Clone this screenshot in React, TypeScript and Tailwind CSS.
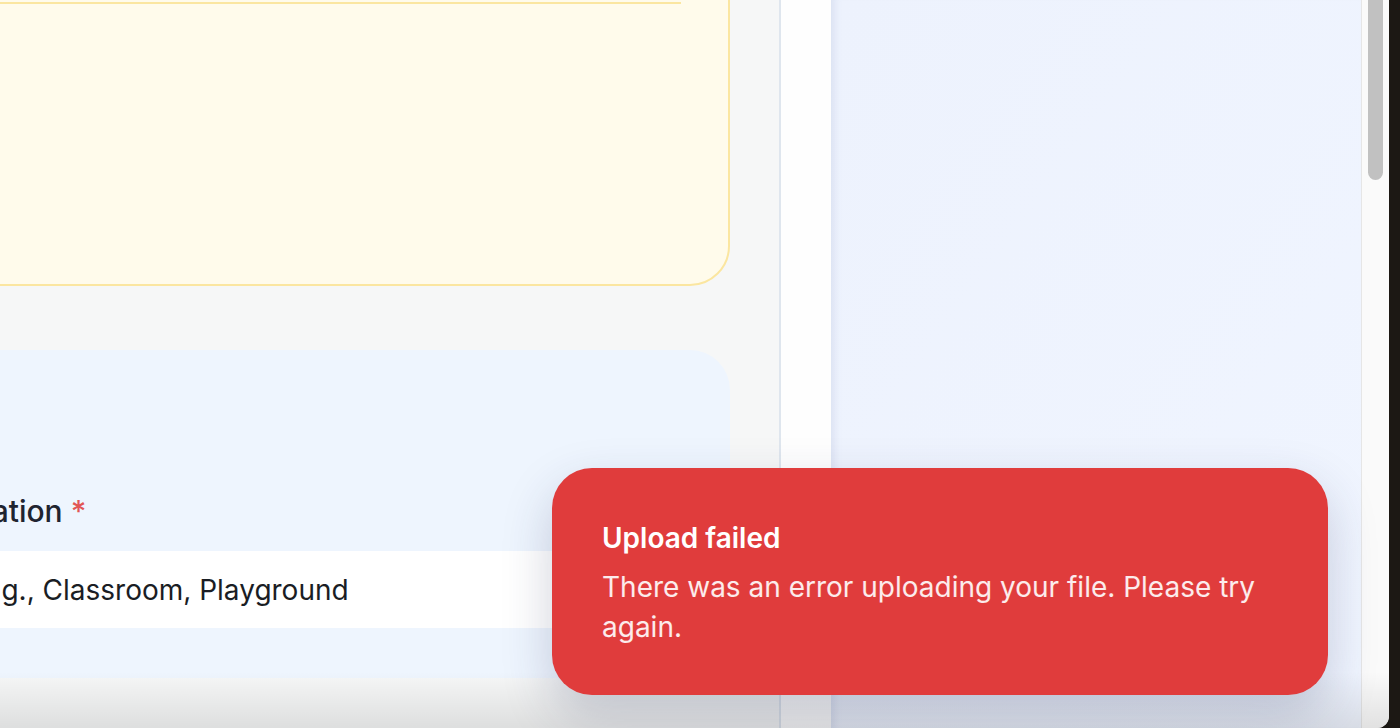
const Toast = () => {
  return (
    <div className="absolute left-[552px] top-[468px] z-20 h-[227px] w-[776px] rounded-[40px] bg-[#e03c3c] px-[50px] pt-[52px] shadow-[0_20px_50px_rgba(40,50,90,0.22)]">
      <h2 className="text-[28px] leading-[36px] font-semibold text-white">Upload failed</h2>
      <p className="mt-[11px] text-[28px] leading-[40px] text-white/90">
        There was an error uploading your file. Please try again.
      </p>
    </div>
  );
};

export default function App() {
  return (
    <div className="relative h-[728px] w-[1400px] overflow-hidden bg-[#1c1814] font-['Inter',sans-serif]">
      <div className="flex h-full w-[1389px] overflow-hidden rounded-br-[12px] bg-white">
        {/* form column */}
        <main className="w-[779px] shrink-0 bg-[#f6f7f7] pr-[49px]">
          <div className="ml-[-109px] flex flex-col gap-[64px]">
            <section className="mt-[-100px] h-[386px] rounded-[40px] border-2 border-[#fbe6a0] bg-[#fffbeb] px-[47px]">
              <div className="h-[102px] border-b-2 border-[#fbe6a0]" />
            </section>

            <section className="rounded-[40px] bg-[#eef5fe] px-[48px] pt-[141px] pb-[50px]">
              <label className="block text-[30px] leading-[40px] font-medium text-[#1f2430]">
                Location <span className="text-[#e25555]">*</span>
              </label>
              <div className="mt-[20px] flex h-[77px] items-center rounded-xl bg-white px-[38px] text-[28px] text-[#1a1d24]">
                e.g., Classroom, Playground
              </div>
            </section>
          </div>
        </main>

        {/* gutter */}
        <div className="w-[52px] shrink-0 border-l-2 border-[#dfe6ee] bg-[#fefefe]" />

        {/* preview panel */}
        <aside className="w-[530px] shrink-0 bg-linear-to-br from-[#edf2fd] to-[#f0f5ff] shadow-[inset_10px_0_10px_-8px_rgba(70,90,150,0.14)]" />

        {/* scrollbar */}
        <div className="w-[28px] shrink-0 border-l border-[#e6e6e6] bg-[#fafafa] px-[6px]">
          <div className="h-[180px] w-[15px] rounded-b-full bg-[#c1c1c1]" />
        </div>
      </div>

      <div className="pointer-events-none absolute inset-x-0 bottom-0 z-10 h-[56px] w-[1389px] bg-linear-to-b from-transparent to-black/10" />

      <Toast />
    </div>
  );
}
